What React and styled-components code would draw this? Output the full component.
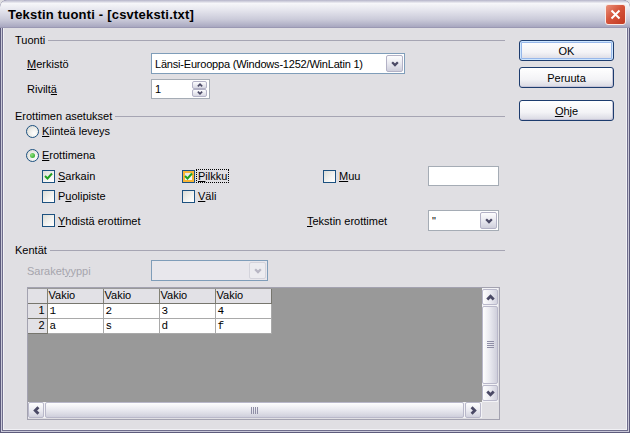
import React from "react";
import styled, { createGlobalStyle } from "styled-components";

const GlobalStyle = createGlobalStyle`
  html, body {
    margin: 0;
    padding: 0;
    background: #e0dfe3;
  }
  body {
    font-family: "Liberation Sans", Arial, sans-serif;
    font-size: 11px;
    color: #000;
  }
`;

const Window = styled.div`
  width: 630px;
  height: 433px;
  box-sizing: border-box;
  display: flex;
  flex-direction: column;
  background: #e0dfe3;
  box-shadow: inset 0 0 0 1px #5d5b7c, inset 0 0 0 2px #c9c8d8,
    inset 0 0 0 3px #6f6d8c, inset 0 0 0 4px #f1f1f5;
  border-radius: 7px 7px 0 0;
  overflow: hidden;
`;

const TitleBar = styled.div`
  height: 28px;
  flex: none;
  display: flex;
  align-items: center;
  justify-content: space-between;
  padding: 0 4px 0 8px;
  box-sizing: border-box;
  background: linear-gradient(
    180deg,
    #b4b3c8 0%,
    #f6f6f9 12%,
    #e6e6ee 35%,
    #cacad9 70%,
    #a9a8c0 96%,
    #8e8ca8 100%
  );
`;

const Title = styled.span`
  font-family: "Liberation Sans", Arial, sans-serif;
  font-weight: bold;
  font-size: 13px;
  color: #000;
  letter-spacing: 0.2px;
`;

const CloseButton = styled.div`
  width: 21px;
  height: 21px;
  box-sizing: border-box;
  border: 1px solid #fbeae6;
  border-radius: 3px;
  background: linear-gradient(135deg, #e9907a 0%, #d6553c 45%, #c23a22 100%);
  display: flex;
  align-items: center;
  justify-content: center;
  margin-top: 1px;
`;

const Body = styled.div`
  flex: 1;
  display: flex;
  padding: 5px 0 0 15px;
`;

const Main = styled.div`
  width: 490px;
  display: flex;
  flex-direction: column;
`;

const Buttons = styled.div`
  margin-left: 14px;
  padding-top: 7px;
  display: flex;
  flex-direction: column;
`;

const PushButton = styled.div`
  width: 95px;
  height: 21px;
  box-sizing: border-box;
  margin-top: ${(p) => p.$top || 0}px;
  border: 1px solid #1d3c6e;
  border-radius: 3px;
  background: linear-gradient(180deg, #ffffff 0%, #f3f3f6 60%, #d8d8e2 100%);
  box-shadow: ${(p) =>
    p.$default
      ? "inset 0 0 0 1px #cee7ff, inset 0 0 0 2px #98b8ea"
      : "inset -1px -1px 0 #c6c5d7"};
  display: flex;
  align-items: center;
  justify-content: center;
`;

const SectionHeader = styled.div`
  height: 14px;
  margin-top: ${(p) => p.$top || 0}px;
  display: flex;
  align-items: center;
  gap: 3px;
`;

const Rule = styled.div`
  flex: 1;
  height: 0;
  border-top: 1px solid #a6a5b3;
  margin-top: 1px;
`;

const FieldRow = styled.div`
  display: flex;
  align-items: center;
  padding-left: 12px;
  margin-top: ${(p) => p.$top || 0}px;
`;

const FieldLabel = styled.span`
  width: 124px;
  color: ${(p) => (p.$disabled ? "#a6a5ad" : "#000")};
`;

const Key = styled.u`
  text-decoration: underline;
  text-underline-offset: 1px;
`;

const Combo = styled.div`
  width: ${(p) => p.$width}px;
  height: 21px;
  box-sizing: border-box;
  border: 1px solid ${(p) => (p.$gray ? "#a5acb5" : "#7f9db9")};
  background: ${(p) => (p.$disabled ? "#e8e7ec" : "#fff")};
  display: flex;
  align-items: center;
  justify-content: space-between;
  padding: 1px;
`;

const ComboText = styled.span`
  padding-left: 2px;
  white-space: nowrap;
  color: #000;
  letter-spacing: ${(p) => (p.$tight ? "-0.2px" : "0")};
`;

const DropButton = styled.div`
  width: 17px;
  height: 17px;
  box-sizing: border-box;
  border: 1px solid ${(p) => (p.$disabled ? "#d4d4dc" : "#b3b2c6")};
  border-radius: 2px;
  background: ${(p) =>
    p.$disabled
      ? "#ececf0"
      : "linear-gradient(180deg, #fdfdfe 0%, #e9e9f0 50%, #cfcfdc 100%)"};
  display: flex;
  align-items: center;
  justify-content: center;
`;

const Spinner = styled.div`
  width: 59px;
  height: 20px;
  box-sizing: border-box;
  border: 1px solid #a5acb5;
  background: #fff;
  display: flex;
  align-items: center;
  justify-content: space-between;
  padding: 1px 2px 1px 1px;
`;

const SpinColumn = styled.div`
  display: flex;
  flex-direction: column;
`;

const SpinButton = styled.div`
  width: 15px;
  height: 8px;
  box-sizing: border-box;
  border: 1px solid #b3b2c6;
  border-radius: 2px;
  background: linear-gradient(180deg, #fdfdfe 0%, #d7d7e2 100%);
  display: flex;
  align-items: center;
  justify-content: center;
`;

const OptionRow = styled.div`
  height: 14px;
  display: flex;
  align-items: center;
  gap: 3px;
  padding-left: 11px;
  margin-top: ${(p) => p.$top || 0}px;
`;

const Radio = styled.span`
  width: 13px;
  height: 13px;
  box-sizing: border-box;
  border-radius: 50%;
  border: 1px solid #1c5180;
  background: radial-gradient(circle at 65% 65%, #ffffff 0%, #f0f0ec 40%, #d3d3cc 100%);
  display: flex;
  align-items: center;
  justify-content: center;
  &::after {
    content: "";
    display: ${(p) => (p.$checked ? "block" : "none")};
    width: 5px;
    height: 5px;
    border-radius: 50%;
    background: radial-gradient(circle at 35% 35%, #8fe07c, #21a121);
  }
`;

const CheckRow = styled.div`
  display: grid;
  grid-template-columns: 140px 125px 121px 71px;
  align-items: center;
  height: ${(p) => p.$height}px;
  margin-top: ${(p) => p.$top || 0}px;
  margin-left: 27px;
`;

const CheckItem = styled.label`
  display: flex;
  align-items: center;
  gap: 3px;
  padding-left: ${(p) => p.$indent || 0}px;
`;

const Box = styled.span`
  width: 13px;
  height: 13px;
  box-sizing: border-box;
  border: 1px solid #1c5180;
  background: linear-gradient(135deg, #dcdcd6 0%, #f4f4f2 60%, #ffffff 100%);
  box-shadow: ${(p) => (p.$hot ? "inset 0 0 0 2px #f8b636" : "none")};
  display: flex;
  align-items: center;
  justify-content: center;
`;

const Focus = styled.span`
  outline: 1px dotted #000;
  outline-offset: 0;
  padding: 0 1px;
  margin-left: -1px;
`;

const TextInput = styled.div`
  height: 20px;
  box-sizing: border-box;
  border: 1px solid #a5acb5;
  background: #fff;
`;

const DataGrid = styled.div`
  width: 473px;
  height: 133px;
  margin-top: 6px;
  box-sizing: border-box;
  border: 1px solid #a3a2b0;
  padding: 0 1px 1px 0;
  display: grid;
  grid-template-columns: 454px 16px;
  grid-template-rows: 114px 16px;
`;

const Viewport = styled.div`
  background: #999999;
  overflow: hidden;
`;

const Sheet = styled.table`
  border-collapse: collapse;
  margin-top: 1px;
`;

const HeadCell = styled.td`
  width: ${(p) => p.$width}px;
  height: 14px;
  box-sizing: border-box;
  padding: 0 2px 0 1px;
  background: #e2e1e6;
  border-right: 1px solid ${(p) => (p.$last ? "#77766e" : "#828175")};
  border-bottom: 1px solid #77766e;
  text-align: ${(p) => (p.$num ? "right" : "left")};
  line-height: 13px;
  vertical-align: top;
  font-size: 11px;
`;

const DataCell = styled.td`
  height: 15px;
  box-sizing: border-box;
  padding: 0 0 0 2px;
  background: #fff;
  border-right: 1px solid #a9a9a9;
  border-bottom: 1px solid #a9a9a9;
  font-family: "Liberation Mono", "Courier New", monospace;
  font-size: 11px;
  line-height: 14px;
  vertical-align: top;
`;

const ScrollTrack = styled.div`
  display: flex;
  flex-direction: ${(p) => (p.$vertical ? "column" : "row")};
  background: #f3f3f6;
  gap: 1px;
  padding: ${(p) => (p.$vertical ? "1px 0" : "0 1px 0 0")};
`;

const ScrollButton = styled.div`
  width: 16px;
  height: 16px;
  flex: none;
  box-sizing: border-box;
  border: 1px solid #b9b8ca;
  border-radius: 2px;
  background: linear-gradient(
    ${(p) => (p.$vertical ? "90deg" : "180deg")},
    #fefefe 0%,
    #ececf2 50%,
    #d2d2de 100%
  );
  display: flex;
  align-items: center;
  justify-content: center;
`;

const Thumb = styled.div`
  flex: 1;
  box-sizing: border-box;
  border: 1px solid #b9b8ca;
  border-radius: 2px;
  background: linear-gradient(
    ${(p) => (p.$vertical ? "90deg" : "180deg")},
    #fefefe 0%,
    #ebebf1 45%,
    #cfcfdb 100%
  );
  display: flex;
  align-items: center;
  justify-content: center;
`;

const Corner = styled.div`
  background: #e0dfe3;
`;

const Chevron = ({ dir = "down", color = "#4b4a66", size = 7, weight = 2 }) => {
  const pts = {
    down: "1,2 3.5,4.5 6,2",
    up: "1,5 3.5,2.5 6,5",
    left: "5,1 2.5,3.5 5,6",
    right: "2,1 4.5,3.5 2,6",
  }[dir];
  return (
    <svg width={size} height={size} viewBox="0 0 7 7">
      <polyline points={pts} fill="none" stroke={color} strokeWidth={weight} />
    </svg>
  );
};

const Tick = () => (
  <svg width="9" height="9" viewBox="0 0 9 9">
    <polyline points="1,4 3.5,6.5 8,1.5" fill="none" stroke="#21a121" strokeWidth="2" />
  </svg>
);

const Grip = ({ vertical }) =>
  vertical ? (
    <svg width="7" height="8" viewBox="0 0 7 8">
      {[0, 2, 4, 6].map((y) => (
        <rect key={y} x="0" y={y} width="7" height="1" fill="#8f8ea6" />
      ))}
    </svg>
  ) : (
    <svg width="8" height="7" viewBox="0 0 8 7">
      {[0, 2, 4, 6].map((x) => (
        <rect key={x} x={x} y="0" width="1" height="7" fill="#8f8ea6" />
      ))}
    </svg>
  );

const columns = ["Vakio", "Vakio", "Vakio", "Vakio"];
const rows = [
  ["1", "2", "3", "4"],
  ["a", "s", "d", "f"],
];

export default function App() {
  return (
    <>
      <GlobalStyle />
      <Window>
        <TitleBar>
          <Title>Tekstin tuonti - [csvteksti.txt]</Title>
          <CloseButton>
            <svg width="11" height="11" viewBox="0 0 11 11">
              <path d="M1.5 1.5 L9.5 9.5 M9.5 1.5 L1.5 9.5" stroke="#fff" strokeWidth="2" />
            </svg>
          </CloseButton>
        </TitleBar>
        <Body>
          <Main>
            <SectionHeader>
              <span>Tuonti</span>
              <Rule />
            </SectionHeader>
            <FieldRow $top={6}>
              <FieldLabel>
                <Key>M</Key>erkistö
              </FieldLabel>
              <Combo $width={254}>
                <ComboText $tight>Länsi-Eurooppa (Windows-1252/WinLatin 1)</ComboText>
                <DropButton>
                  <Chevron dir="down" size={8} />
                </DropButton>
              </Combo>
            </FieldRow>
            <FieldRow $top={5}>
              <FieldLabel>
                Rivilt<Key>ä</Key>
              </FieldLabel>
              <Spinner>
                <ComboText>1</ComboText>
                <SpinColumn>
                  <SpinButton>
                    <Chevron dir="up" size={6} />
                  </SpinButton>
                  <SpinButton>
                    <Chevron dir="down" size={6} />
                  </SpinButton>
                </SpinColumn>
              </Spinner>
            </FieldRow>

            <SectionHeader $top={10}>
              <span>Erottimen asetukset</span>
              <Rule />
            </SectionHeader>
            <OptionRow $top={1}>
              <Radio />
              <span>
                <Key>K</Key>iinteä leveys
              </span>
            </OptionRow>
            <OptionRow $top={10}>
              <Radio $checked />
              <span>
                <Key>E</Key>rottimena
              </span>
            </OptionRow>
            <CheckRow $height={20} $top={4}>
              <CheckItem>
                <Box>
                  <Tick />
                </Box>
                <span>
                  <Key>S</Key>arkain
                </span>
              </CheckItem>
              <CheckItem>
                <Box $hot>
                  <Tick />
                </Box>
                <Focus>
                  <Key>P</Key>ilkku
                </Focus>
              </CheckItem>
              <CheckItem $indent={16}>
                <Box />
                <span>
                  <Key>M</Key>uu
                </span>
              </CheckItem>
              <TextInput />
            </CheckRow>
            <CheckRow $height={14} $top={3}>
              <CheckItem>
                <Box />
                <span>
                  P<Key>u</Key>olipiste
                </span>
              </CheckItem>
              <CheckItem>
                <Box />
                <span>
                  <Key>V</Key>äli
                </span>
              </CheckItem>
            </CheckRow>
            <CheckRow $height={21} $top={7}>
              <CheckItem>
                <Box />
                <span>
                  <Key>Y</Key>hdistä erottimet
                </span>
              </CheckItem>
              <span />
              <span>
                <Key>T</Key>ekstin erottimet
              </span>
              <Combo $width={71} $gray>
                <ComboText>"</ComboText>
                <DropButton>
                  <Chevron dir="down" size={8} />
                </DropButton>
              </Combo>
            </CheckRow>

            <SectionHeader $top={12}>
              <span>Kentät</span>
              <Rule />
            </SectionHeader>
            <FieldRow $top={3}>
              <FieldLabel $disabled>
                Saraket<Key>y</Key>yppi
              </FieldLabel>
              <Combo $width={117} $disabled>
                <ComboText />
                <DropButton $disabled>
                  <Chevron dir="down" size={8} color="#b8b7c4" />
                </DropButton>
              </Combo>
            </FieldRow>
            <FieldRow>
              <DataGrid>
                <Viewport>
                  <Sheet>
                    <tbody>
                      <tr>
                        <HeadCell $width={19} />
                        {columns.map((c, i) => (
                          <HeadCell key={i} $width={56} $last={i === 3}>
                            {c}
                          </HeadCell>
                        ))}
                      </tr>
                      {rows.map((r, i) => (
                        <tr key={i}>
                          <HeadCell $width={19} $num>
                            {i + 1}
                          </HeadCell>
                          {r.map((v, j) => (
                            <DataCell key={j}>{v}</DataCell>
                          ))}
                        </tr>
                      ))}
                    </tbody>
                  </Sheet>
                </Viewport>
                <ScrollTrack $vertical>
                  <ScrollButton $vertical>
                    <Chevron dir="up" size={9} weight={2.2} />
                  </ScrollButton>
                  <Thumb $vertical>
                    <Grip vertical />
                  </Thumb>
                  <ScrollButton $vertical>
                    <Chevron dir="down" size={9} weight={2.2} />
                  </ScrollButton>
                </ScrollTrack>
                <ScrollTrack>
                  <ScrollButton>
                    <Chevron dir="left" size={9} weight={2.2} />
                  </ScrollButton>
                  <Thumb>
                    <Grip />
                  </Thumb>
                  <ScrollButton>
                    <Chevron dir="right" size={9} weight={2.2} />
                  </ScrollButton>
                </ScrollTrack>
                <Corner />
              </DataGrid>
            </FieldRow>
          </Main>
          <Buttons>
            <PushButton $default>OK</PushButton>
            <PushButton $top={6}>Peruuta</PushButton>
            <PushButton $top={12}>
              <Key>O</Key>hje
            </PushButton>
          </Buttons>
        </Body>
      </Window>
    </>
  );
}
